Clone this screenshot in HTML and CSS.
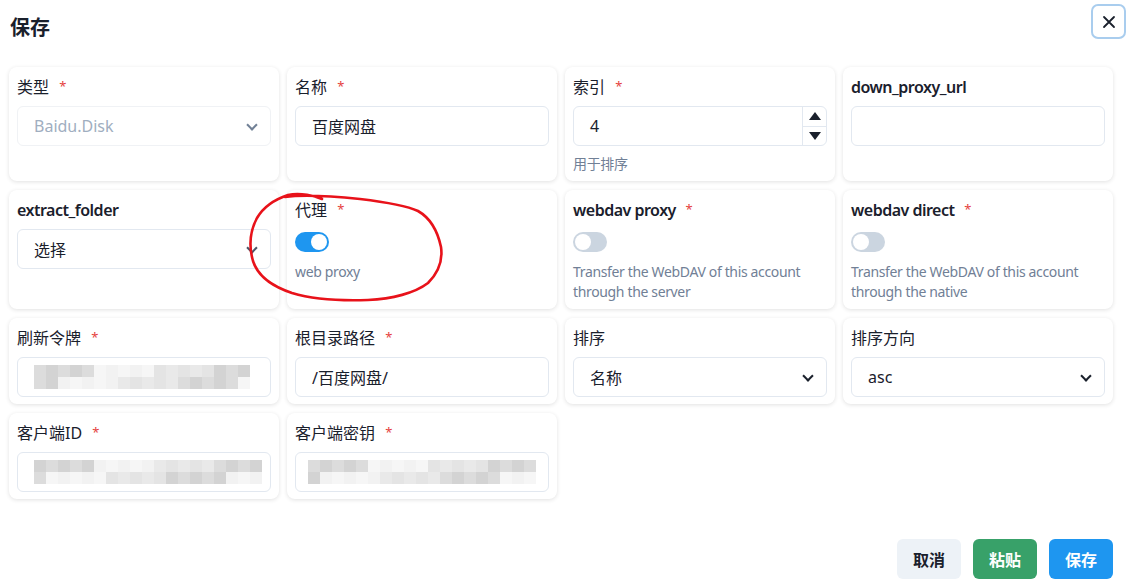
FILE: index.html
```html
<!DOCTYPE html>
<html lang="zh-CN">
<head>
    <meta charset="UTF-8">
    <meta name="viewport" content="width=device-width, initial-scale=1.0">
    <title>保存</title>
    <link rel="stylesheet" href="styles.css">
</head>
<body>
    <div class="header">
        <h1>保存</h1>
        <button class="close-btn" aria-label="关闭">
            <svg width="14" height="14" viewBox="0 0 14 14"><path d="M2 2L12 12M12 2L2 12" stroke="#1a202c" stroke-width="1.8" stroke-linecap="round"/></svg>
        </button>
    </div>

    <div class="form-grid">
        <!-- row 1 -->
        <div class="card">
            <label>类型 <span class="req">*</span></label>
            <div class="select disabled">Baidu.Disk<span class="chev"></span></div>
        </div>
        <div class="card">
            <label>名称 <span class="req">*</span></label>
            <div class="input">百度网盘</div>
        </div>
        <div class="card">
            <label>索引 <span class="req">*</span></label>
            <div class="input number">4
                <div class="stepper">
                    <span class="up"></span>
                    <span class="down"></span>
                </div>
            </div>
            <p class="hint">用于排序</p>
        </div>
        <div class="card">
            <label class="latin">down_proxy_url</label>
            <div class="input"></div>
        </div>

        <!-- row 2 -->
        <div class="card">
            <label class="latin">extract_folder</label>
            <div class="select">选择<span class="chev"></span></div>
        </div>
        <div class="card">
            <label>代理 <span class="req">*</span></label>
            <div class="switch-row"><span class="switch on"></span></div>
            <p class="hint">web proxy</p>
        </div>
        <div class="card">
            <label class="latin">webdav proxy <span class="req">*</span></label>
            <div class="switch-row"><span class="switch"></span></div>
            <p class="hint">Transfer the WebDAV of this account through the server</p>
        </div>
        <div class="card">
            <label class="latin">webdav direct <span class="req">*</span></label>
            <div class="switch-row"><span class="switch"></span></div>
            <p class="hint">Transfer the WebDAV of this account through the native</p>
        </div>

        <!-- row 3 -->
        <div class="card">
            <label>刷新令牌 <span class="req">*</span></label>
            <div class="input"><div class="mosaic" data-cols="18"></div></div>
        </div>
        <div class="card">
            <label>根目录路径 <span class="req">*</span></label>
            <div class="input">/百度网盘/</div>
        </div>
        <div class="card">
            <label>排序</label>
            <div class="select">名称<span class="chev dark"></span></div>
        </div>
        <div class="card">
            <label>排序方向</label>
            <div class="select">asc<span class="chev dark"></span></div>
        </div>

        <!-- row 4 -->
        <div class="card">
            <label>客户端ID <span class="req">*</span></label>
            <div class="input"><div class="mosaic" data-cols="19"></div></div>
        </div>
        <div class="card">
            <label>客户端密钥 <span class="req">*</span></label>
            <div class="input"><div class="mosaic wide" data-cols="19"></div></div>
        </div>
    </div>

    <div class="footer">
        <button class="btn btn-cancel">取消</button>
        <button class="btn btn-paste">粘贴</button>
        <button class="btn btn-save">保存</button>
    </div>

    <svg class="scribble" width="220" height="125" viewBox="0 0 220 125">
        <path d="M45 12 C 60 10, 90 11, 120 14 C 145 17, 165 20, 178 26 C 192 34, 198 48, 201 62 C 203 76, 198 88, 188 98 C 175 108, 152 114, 128 115 C 100 116, 72 114, 52 108 C 34 102, 18 92, 13 76 C 9 62, 10 46, 17 33 C 24 21, 36 14, 48 10 C 60 7, 75 11, 82 14" fill="none" stroke="#e8121a" stroke-width="2.6" stroke-linecap="round"/>
    </svg>

    <script>
        // fill the blurred fields with grey blocks
        const shades = ['#dcdcdc', '#e9e9e9', '#f2f2f2', '#d3d3d3', '#e4e4e4', '#f6f6f6'];
        document.querySelectorAll('.mosaic').forEach((box, n) => {
            const cols = parseInt(box.dataset.cols);
            box.style.gridTemplateColumns = `repeat(${cols}, 12px)`;
            for (let i = 0; i < cols * 2; i++) {
                const cell = document.createElement('span');
                cell.style.background = shades[(i * 7 + n * 3 + (i % 5) * 2) % shades.length];
                box.appendChild(cell);
            }
        });
    </script>
</body>
</html>
```

FILE: styles.css
```css
* { box-sizing: border-box; }
body { margin: 0; background: #fff; color: #1a202c; font-family: "Noto Sans", "Noto Sans CJK SC", sans-serif; position: relative; width: 1129px; height: 588px; overflow: hidden; }

.header { display: flex; justify-content: space-between; align-items: flex-start; height: 67px; }
.header h1 { margin: 15px 0 0 10px; font-size: 20px; line-height: 26px; font-weight: 700; }
.close-btn { margin: 4px 3px 0 0; width: 35px; height: 35px; border: 2px solid #a9cdee; border-radius: 7px; background: #fff; display: flex; align-items: center; justify-content: center; padding: 0; }

.form-grid { display: grid; grid-template-columns: repeat(4, 270px); column-gap: 8px; row-gap: 9px; padding-left: 9px; }
.card { background: #fff; border-radius: 8px; box-shadow: 0 1px 4px rgba(0,0,0,0.12); padding: 8px 8px 7px; }
.card label { display: block; height: 24px; font-size: 16px; line-height: 24px; margin-bottom: 7px; }
.card label.latin { font-weight: 600; letter-spacing: -0.5px; }
.req { position: relative; top: -2px; color: #e53e3e; font-size: 13px; line-height: 1; margin-left: 6px; font-weight: 400; letter-spacing: 0; }

.input, .select { position: relative; height: 40px; border: 1px solid #e2e8f0; border-radius: 6px; padding: 0 16px; display: flex; align-items: center; font-size: 16px; }
.select.disabled { color: #a0aec0; border-color: #f0f2f5; }
.chev { position: absolute; right: 14px; top: 14px; width: 8px; height: 8px; border-right: 2px solid #4a5568; border-bottom: 2px solid #4a5568; transform: rotate(45deg); }
.chev.dark { border-color: #1a202c; }
.select.disabled .chev { border-color: #718096; }

.stepper { position: absolute; right: 0; top: 0; bottom: 0; width: 24px; border-left: 1px solid #e2e8f0; display: flex; flex-direction: column; }
.stepper span { flex: 1; display: flex; align-items: center; justify-content: center; }
.stepper .up { border-bottom: 1px solid #e2e8f0; }
.stepper .up::after { content: ""; border-left: 6px solid transparent; border-right: 6px solid transparent; border-bottom: 8px solid #1a202c; }
.stepper .down::after { content: ""; border-left: 6px solid transparent; border-right: 6px solid transparent; border-top: 8px solid #1a202c; }

.hint { margin: 8px 0 0; font-size: 14px; line-height: 20px; color: #718096; letter-spacing: -0.35px; }
.switch-row { height: 26px; display: flex; align-items: center; }
.switch-row + .hint { margin-top: 7px; }
.switch { position: relative; width: 34px; height: 20px; border-radius: 10px; background: #cbd5e0; }
.switch::after { content: ""; position: absolute; left: 2px; top: 2px; width: 16px; height: 16px; border-radius: 50%; background: #fff; }
.switch.on { background: #1e96f0; }
.switch.on::after { left: 16px; }

.mosaic { display: grid; grid-auto-rows: 12px; }
.mosaic.wide { margin-left: -4px; }

.footer { display: flex; justify-content: flex-end; gap: 12px; margin-top: 40px; padding-right: 16px; }
.btn { width: 64px; height: 40px; border: none; border-radius: 6px; font-family: inherit; font-size: 16px; font-weight: 700; }
.btn-cancel { background: #edf2f7; color: #1a202c; }
.btn-paste { background: #38a169; color: #fff; }
.btn-save { background: #1e96f0; color: #fff; }

.scribble { position: absolute; left: 240px; top: 185px; pointer-events: none; }
```
